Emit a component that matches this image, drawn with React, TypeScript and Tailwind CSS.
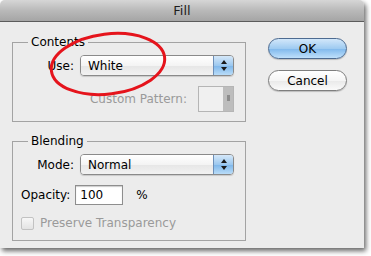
import React from "react"

const font = { fontFamily: '"DejaVu Sans", "Liberation Sans", sans-serif' }

function Arrows() {
  return (
    <svg width="8" height="13" viewBox="0 0 8 13">
      <path d="M4 1 L7 5 L1 5 Z" fill="#1a1a1a" />
      <path d="M4 12 L7 8 L1 8 Z" fill="#1a1a1a" />
    </svg>
  )
}

function Popup({ value }: { value: string }) {
  return (
    <div className="flex h-[21px] w-[154px] rounded-[4px] border border-[#8a8a8a] overflow-hidden shadow-[0_1px_1px_rgba(0,0,0,0.15)]">
      <div className="flex-1 flex items-center pl-[7px] text-[12px] text-black bg-[linear-gradient(#ffffff,#f4f4f4_50%,#e6e6e6_51%,#f2f2f2)]">
        {value}
      </div>
      <div className="w-[20px] flex items-center justify-center border-l border-[#6d8fb8] bg-[linear-gradient(#d5e8f9,#9cc8ef_50%,#7db6ea_51%,#b9dcf8)]">
        <Arrows />
      </div>
    </div>
  )
}

function Group({ title, children, className }: { title: string; children: React.ReactNode; className?: string }) {
  return (
    <fieldset className={`border border-[#a3a3a3] w-[234px] ${className ?? ""}`}>
      <legend className="ml-[15px] px-[3px] text-[12px] leading-[14px] text-black">{title}</legend>
      {children}
    </fieldset>
  )
}

export default function App() {
  return (
    <div className="relative w-[371px] h-[256px] bg-white overflow-hidden" style={font}>
      <div className="w-[364px] h-[248px] bg-[#ececec] rounded-t-[5px] flex flex-col shadow-[2px_3px_5px_rgba(0,0,0,0.6)]">
        {/* Title bar */}
        <div className="h-[22px] rounded-t-[5px] border-b border-[#5c5c5c] bg-[linear-gradient(#d6d6d6,#b9b9b9_50%,#a5a5a5)] flex items-center justify-center text-[13px] text-[#1e1e1e]">
          Fill
        </div>

        <div className="flex">
          <div className="flex flex-col pl-[12px] pt-[13px]">
            <Group title="Contents">
              <div className="pt-[6px] pb-[9px]">
                <div className="flex items-center">
                  <div className="w-[61px] text-right text-[12px] text-black">Use:</div>
                  <div className="ml-[6px]">
                    <Popup value="White" />
                  </div>
                </div>
                <div className="flex items-center justify-end pr-[11px] mt-[10px]">
                  <span className="text-[12px] text-[#9a9a9a] mr-[11px]">Custom Pattern:</span>
                  <div className="flex w-[36px] h-[26px] border border-[#b5b5b5] bg-[#f0f0f0]">
                    <div className="flex-1" />
                    <div className="w-[10px] bg-[#bdbdbd] flex items-start justify-center pt-[8px]">
                      <div className="w-[3px] h-[6px] bg-[#8c8c8c]" />
                    </div>
                  </div>
                </div>
              </div>
            </Group>

            <Group title="Blending" className="mt-[12px]">
              <div className="pt-[6px] pb-[8px]">
                <div className="flex items-center">
                  <div className="w-[61px] text-right text-[12px] text-black">Mode:</div>
                  <div className="ml-[6px]">
                    <Popup value="Normal" />
                  </div>
                </div>
                <div className="flex items-center pl-[8px] mt-[10px]">
                  <span className="text-[12px] text-black">Opacity:</span>
                  <div className="ml-[5px] w-[48px] h-[20px] border border-[#8e8e8e] bg-white flex items-center pl-[4px] text-[12px] text-black shadow-[inset_0_1px_1px_rgba(0,0,0,0.2)]">
                    100
                  </div>
                  <span className="ml-[13px] text-[12px] text-black">%</span>
                </div>
                <div className="flex items-center pl-[8px] mt-[9px]">
                  <div className="w-[13px] h-[13px] rounded-[2px] border border-[#c2c2c2] bg-[linear-gradient(#f7f7f7,#e3e3e3)]" />
                  <span className="ml-[6px] text-[12px] text-[#9a9a9a]">Preserve Transparency</span>
                </div>
              </div>
            </Group>
          </div>

          <div className="flex flex-col pl-[22px] pt-[16px] gap-[11px]">
            <button className="w-[79px] h-[21px] rounded-full border border-[#4d6b91] bg-[linear-gradient(#d2e7fa,#9fcbf1_50%,#7fb8ec_51%,#bfe0fb)] text-[12px] text-black flex items-center justify-center shadow-[0_1px_1px_rgba(0,0,0,0.2)]">
              OK
            </button>
            <button className="w-[79px] h-[21px] rounded-full border border-[#7e7e7e] bg-[linear-gradient(#ffffff,#f5f5f5_50%,#e9e9e9_51%,#fafafa)] text-[12px] text-black flex items-center justify-center shadow-[0_1px_1px_rgba(0,0,0,0.2)]">
              Cancel
            </button>
          </div>
        </div>
      </div>

      {/* red annotation ring */}
      <svg className="absolute left-0 top-0 pointer-events-none" width="371" height="256">
        <ellipse cx="108" cy="64" rx="57" ry="30" transform="rotate(-7 108 64)" fill="none" stroke="#e5141c" strokeWidth="3" />
      </svg>
    </div>
  )
}
